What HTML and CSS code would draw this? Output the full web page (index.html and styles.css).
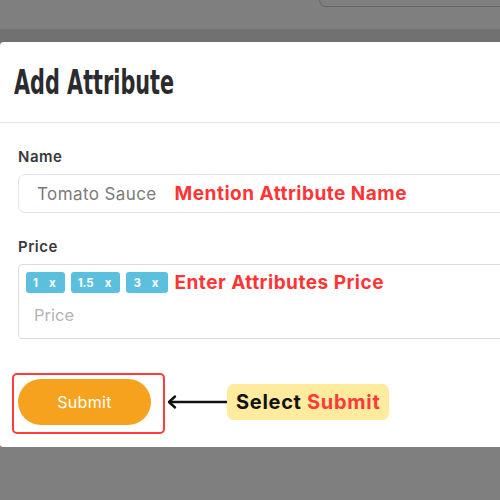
FILE: index.html
```html
<!DOCTYPE html>
<html>
<head>
<meta charset="utf-8">
<link rel="stylesheet" href="styles.css">
</head>
<body>
<div class="page">
  <div class="topbar"><div class="search-stub"></div></div>
  <div class="band"></div>
  <div class="modal">
    <div class="modal-header">
      <h1 class="title">Add Attribute</h1>
    </div>
    <div class="modal-body">
      <div class="field">
        <label class="label">Name</label>
        <div class="input">
          <span class="value">Tomato Sauce</span>
          <span class="note">Mention Attribute Name</span>
        </div>
      </div>
      <div class="field">
        <label class="label">Price</label>
        <div class="tagbox">
          <div class="tags">
            <span class="tag"><span>1</span><span>x</span></span>
            <span class="tag"><span>1.5</span><span>x</span></span>
            <span class="tag"><span>3</span><span>x</span></span>
            <span class="note">Enter Attributes Price</span>
          </div>
          <div class="placeholder">Price</div>
        </div>
      </div>
      <div class="footer">
        <div class="highlight"><button class="submit">Submit</button></div>
        <svg class="arrow" width="60" height="16" viewBox="0 0 60 16">
          <path d="M2 8 H60" stroke="#111" stroke-width="2.4" fill="none"/>
          <path d="M8 2.5 L2 8 L8 13.5" stroke="#111" stroke-width="2.4" fill="none" stroke-linecap="round" stroke-linejoin="round"/>
        </svg>
        <div class="callout">Select <span class="red">Submit</span></div>
      </div>
    </div>
  </div>
</div>
</body>
</html>
```
FILE: styles.css
```css
html, body {
  margin: 0;
  padding: 0;
  background: #7f7f7f;
  overflow: hidden;
}
.page {
  width: 500px;
  height: 500px;
  overflow: hidden;
  font-family: "Inter", "Noto Sans", sans-serif;
}
.topbar {
  height: 29px;
  display: flex;
  justify-content: flex-end;
}
.search-stub {
  width: 180px;
  height: 6px;
  border-left: 1px solid #686868;
  border-bottom: 1px solid #686868;
  border-bottom-left-radius: 8px;
}
.band {
  height: 13px;
  background: #717171;
}
.modal {
  width: 560px;
  height: 405px;
  background: #fff;
  border-top-left-radius: 4px;
  border-bottom-left-radius: 3px;
}
.modal-header {
  height: 80px;
  border-bottom: 1px solid #e4e7eb;
  display: flex;
  align-items: center;
  padding: 0 14px;
}
.title {
  margin: 0;
  font-family: "DejaVu Sans Condensed", "DejaVu Sans", sans-serif;
  font-weight: bold;
  font-size: 33px;
  line-height: 33px;
  color: #2a2b2e;
  transform: scaleX(0.7);
  transform-origin: left center;
  white-space: nowrap;
  letter-spacing: 0;
}
.modal-body {
  padding: 24px 0 0 18px;
}
.field {
  display: flex;
  flex-direction: column;
  gap: 7px;
  margin-bottom: 24px;
}
.label {
  font-size: 15px;
  line-height: 20px;
  font-weight: 600;
  color: #383a3d;
  letter-spacing: 0.5px;
}
.input {
  height: 37px;
  border: 1px solid #e3e3e3;
  border-radius: 7px;
  display: flex;
  align-items: center;
  padding-left: 18px;
  gap: 18px;
}
.value {
  font-size: 17px;
  color: #7a7a7a;
  letter-spacing: 0.4px;
}
.note {
  font-size: 19px;
  font-weight: 700;
  color: #ff3434;
  letter-spacing: 0.5px;
  white-space: nowrap;
}
.tagbox {
  height: 66px;
  border: 1px solid #dcdcdc;
  border-radius: 4px;
  padding: 7px 0 0 7px;
}
.tags {
  display: flex;
  align-items: center;
  gap: 6px;
  height: 21px;
}
.tags .note {
  margin-left: 1px;
}
.tag {
  height: 21px;
  display: inline-flex;
  align-items: center;
  gap: 11px;
  padding: 0 9px 0 7px;
  background: #5bc0de;
  border-radius: 3px;
  color: #fff;
  font-size: 11.5px;
  font-weight: 700;
}
.placeholder {
  margin-top: 12px;
  padding-left: 8px;
  font-size: 16.5px;
  color: #b3b3b3;
}
.footer {
  display: flex;
  align-items: center;
  margin-left: -6px;
  margin-top: 34px;
}
.highlight {
  border: 2px solid #ff3b3b;
  border-radius: 5px;
  padding: 4px 12px 7px 4px;
}
.submit {
  display: block;
  width: 133px;
  height: 46px;
  border: none;
  border-radius: 23px;
  background: #f7a21e;
  color: #fff;
  font-family: "Inter", "Noto Sans", sans-serif;
  font-size: 16px;
  font-weight: 400;
  letter-spacing: 0.3px;
}
.arrow {
  display: block;
  margin-left: 2px;
  margin-top: -3px;
}
.callout {
  height: 36px;
  display: flex;
  align-items: center;
  padding: 0 9px;
  background: #ffeb9d;
  border-radius: 7px;
  font-size: 20px;
  font-weight: 700;
  color: #111;
  white-space: pre;
  letter-spacing: 0.7px;
  margin-top: -3px;
}
.red {
  color: #ff3a3a;
}
```
